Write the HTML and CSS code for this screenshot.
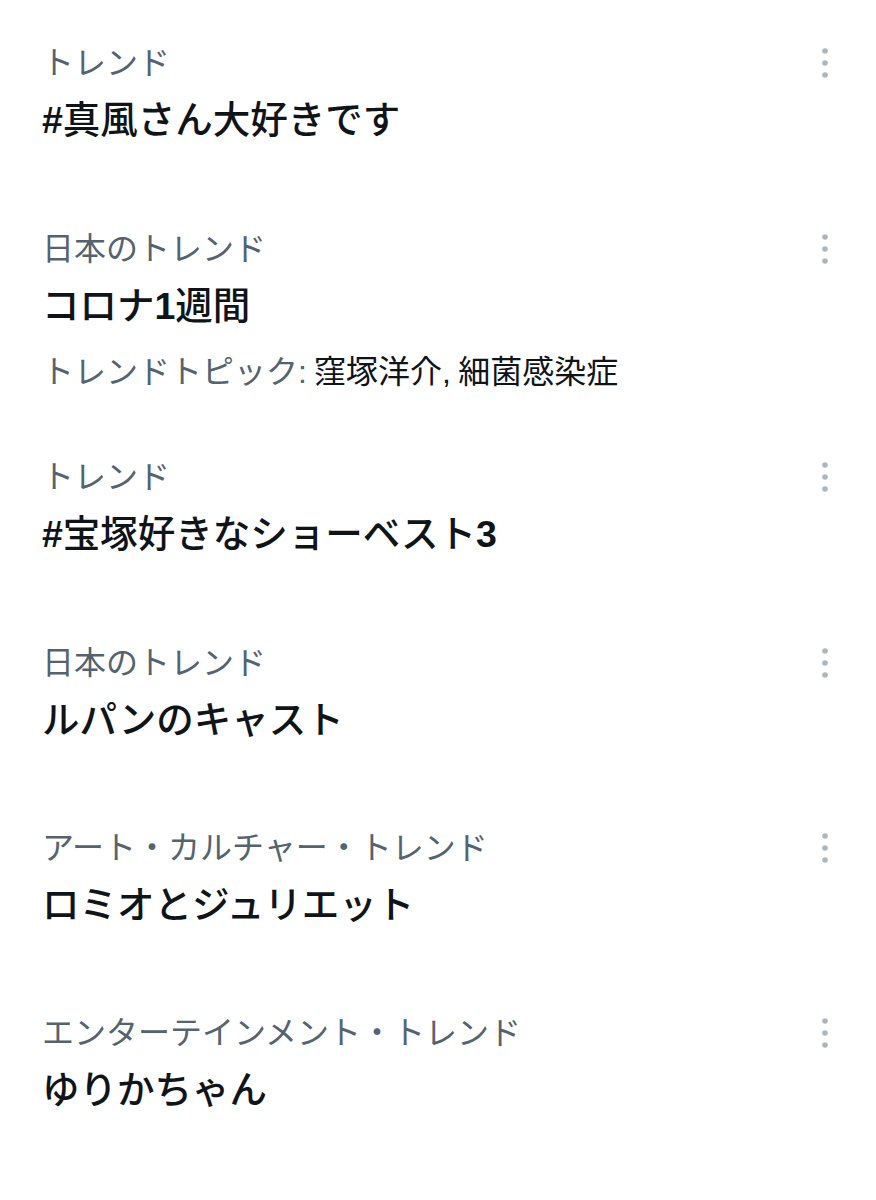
FILE: index.html
```html
<!DOCTYPE html>
<html lang="ja">
<head>
<meta charset="utf-8">
<title>トレンド</title>
<link rel="stylesheet" href="styles.css">
</head>
<body>
<main class="trends">
  <article class="trend">
    <div class="trend-body">
      <div class="trend-cat">トレンド</div>
      <div class="trend-title"><span class="latin">#</span>真風さん大好きです</div>
    </div>
    <svg class="more" viewBox="0 0 6 30" aria-hidden="true"><circle cx="3" cy="3" r="2.8"/><circle cx="3" cy="15" r="2.8"/><circle cx="3" cy="27" r="2.8"/></svg>
  </article>
  <article class="trend">
    <div class="trend-body">
      <div class="trend-cat">日本のトレンド</div>
      <div class="trend-title">コロナ<span class="latin">1</span>週間</div>
      <div class="trend-topics">トレンドトピック<span class="latin">:</span> <span class="topic">窪塚洋介<span class="latin">,</span> 細菌感染症</span></div>
    </div>
    <svg class="more" viewBox="0 0 6 30" aria-hidden="true"><circle cx="3" cy="3" r="2.8"/><circle cx="3" cy="15" r="2.8"/><circle cx="3" cy="27" r="2.8"/></svg>
  </article>
  <article class="trend">
    <div class="trend-body">
      <div class="trend-cat">トレンド</div>
      <div class="trend-title"><span class="latin">#</span>宝塚好きなショーベスト<span class="latin">3</span></div>
    </div>
    <svg class="more" viewBox="0 0 6 30" aria-hidden="true"><circle cx="3" cy="3" r="2.8"/><circle cx="3" cy="15" r="2.8"/><circle cx="3" cy="27" r="2.8"/></svg>
  </article>
  <article class="trend">
    <div class="trend-body">
      <div class="trend-cat">日本のトレンド</div>
      <div class="trend-title">ルパンのキャスト</div>
    </div>
    <svg class="more" viewBox="0 0 6 30" aria-hidden="true"><circle cx="3" cy="3" r="2.8"/><circle cx="3" cy="15" r="2.8"/><circle cx="3" cy="27" r="2.8"/></svg>
  </article>
  <article class="trend">
    <div class="trend-body">
      <div class="trend-cat">アート・カルチャー・トレンド</div>
      <div class="trend-title">ロミオとジュリエット</div>
    </div>
    <svg class="more" viewBox="0 0 6 30" aria-hidden="true"><circle cx="3" cy="3" r="2.8"/><circle cx="3" cy="15" r="2.8"/><circle cx="3" cy="27" r="2.8"/></svg>
  </article>
  <article class="trend">
    <div class="trend-body">
      <div class="trend-cat">エンターテインメント・トレンド</div>
      <div class="trend-title">ゆりかちゃん</div>
    </div>
    <svg class="more" viewBox="0 0 6 30" aria-hidden="true"><circle cx="3" cy="3" r="2.8"/><circle cx="3" cy="15" r="2.8"/><circle cx="3" cy="27" r="2.8"/></svg>
  </article>
</main>
</body>
</html>
```
FILE: styles.css
```css
html, body {
  margin: 0;
  padding: 0;
  background: #ffffff;
}

body {
  font-family: "Noto Sans CJK JP", "Noto Sans", sans-serif;
  color: #0f1419;
}

.trends {
  display: flex;
  flex-direction: column;
}

.trend {
  display: flex;
  align-items: flex-start;
  padding: 41px 48px 24px 42px;
}

.trend:first-child {
  padding-top: 40px;
}

.trend-body {
  flex: 1;
  min-width: 0;
}

.trend-cat {
  font-size: 32px;
  line-height: 40px;
  font-weight: 400;
  color: #536370;
  white-space: nowrap;
}

.trend-title {
  margin-top: 15px;
  font-size: 37.5px;
  line-height: 44px;
  font-weight: 500;
  color: #0f1419;
  white-space: nowrap;
}

.trend-title:last-child {
  margin-bottom: 21px;
}

.trend-topics {
  margin-top: 24px;
  font-size: 32px;
  line-height: 40px;
  color: #536370;
  white-space: nowrap;
}

.topic {
  color: #0f1419;
}

.latin {
  font-family: "Liberation Sans", Arial, sans-serif;
  line-height: 1;
}

.trend-title .latin {
  font-weight: 700;
}

.more {
  flex: none;
  width: 6px;
  height: 30px;
  margin-top: 8px;
  fill: #adb6be;
}
```
